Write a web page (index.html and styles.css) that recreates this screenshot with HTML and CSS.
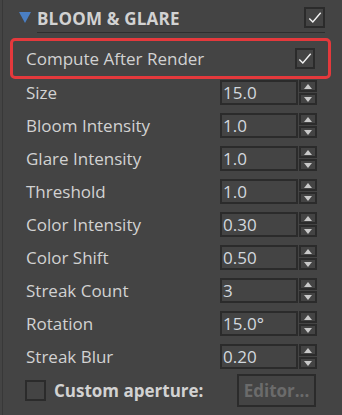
FILE: index.html
```html
<!DOCTYPE html>
<html lang="en">
<head>
  <meta charset="UTF-8" />
  <title>Bloom &amp; Glare</title>
  <link rel="stylesheet" href="styles.css">
</head>
<body>
  <div class="panel">
    <div class="section-head">
      <span class="caret"></span>
      <div class="head-main">
        <h2>BLOOM &amp; GLARE</h2>
        <span class="check big">
          <svg viewBox="0 0 16 16"><polyline points="1.5,8.5 5.5,12.5 14.5,2" /></svg>
        </span>
      </div>
    </div>

    <div class="highlight">
      <span>Compute After Render</span>
      <span class="check">
        <svg viewBox="0 0 16 16"><polyline points="1.5,8.5 5.5,12.5 14.5,2" /></svg>
      </span>
    </div>

    <ul class="params" id="params"></ul>

    <div class="aperture">
      <span class="check empty"></span>
      <span class="aperture-label">Custom aperture:</span>
      <button class="editor" disabled>Editor...</button>
    </div>
  </div>

  <script>
    const params = [
      ['Size', '15.0'],
      ['Bloom Intensity', '1.0'],
      ['Glare Intensity', '1.0'],
      ['Threshold', '1.0'],
      ['Color Intensity', '0.30'],
      ['Color Shift', '0.50'],
      ['Streak Count', '3'],
      ['Rotation', '15.0\u00b0'],
      ['Streak Blur', '0.20']
    ];

    // one row per parameter: label + numeric field + spinner
    document.getElementById('params').innerHTML = params.map(([name, val]) => `
      <li class="param">
        <label>${name}</label>
        <span class="field">${val}</span>
        <span class="spinner">
          <span class="arrow up"></span>
          <span class="arrow down"></span>
        </span>
      </li>
    `).join('');
  </script>
</body>
</html>
```

FILE: styles.css
```css
:root {
  --panel-bg: #444444;
  --edge: #2b2b2b;
  --text: #d2d2d2;
  --value: #d2d8de;
  --accent: #4a7fc4;
  --mark: #e4393c;
}
* {
  margin: 0;
  padding: 0;
  box-sizing: border-box;
}
body {
  background: var(--panel-bg);
  font-family: 'Open Sans', 'Noto Sans', sans-serif;
  font-size: 17px;
  color: var(--text);
  width: 342px;
  height: 415px;
  overflow: hidden;
}
.panel {
  height: 415px;
  border-left: 1px solid #383838;
  margin-left: 2px;
}
.section-head {
  display: flex;
  padding-left: 16px;
  height: 33px;
}
.caret {
  width: 0;
  height: 0;
  border-left: 6px solid transparent;
  border-right: 6px solid transparent;
  border-top: 11px solid var(--accent);
  margin-top: 12px;
}
.head-main {
  flex: 1;
  margin-left: 6px;
  margin-right: 17px;
  display: flex;
  justify-content: space-between;
  align-items: flex-start;
  border-bottom: 1px solid #2e2e2e;
}
.head-main h2 {
  font-size: 17px;
  font-weight: 700;
  line-height: 24px;
  margin-top: 7px;
  letter-spacing: 0.2px;
}
.check {
  width: 20px;
  height: 21px;
  border: 2px solid var(--edge);
  display: flex;
  align-items: center;
  justify-content: center;
}
.check.big {
  margin-top: 7px;
  width: 21px;
}
.check svg {
  width: 14px;
  height: 14px;
  fill: none;
  stroke: #f4f4f4;
  stroke-width: 1.6;
}
.highlight {
  margin: 5px 11px 0 7px;
  height: 41px;
  border: 3px solid var(--mark);
  border-radius: 5px;
  display: flex;
  align-items: center;
  justify-content: space-between;
  padding: 0 13px 0 13px;
}
.params {
  list-style: none;
  margin-top: 1px;
  display: flex;
  flex-direction: column;
  gap: 8px;
}
.param {
  display: flex;
  align-items: center;
  height: 25px;
  padding-left: 23px;
}
.param label {
  flex: 1;
}
.field {
  width: 78px;
  height: 25px;
  border: 2px solid var(--edge);
  color: var(--value);
  line-height: 21px;
  padding-left: 1px;
}
.spinner {
  width: 18px;
  height: 25px;
  margin-left: 1px;
  margin-right: 25px;
  display: flex;
  flex-direction: column;
  gap: 1px;
}
.arrow {
  flex: 1;
  border: 2px solid var(--edge);
  display: flex;
  align-items: center;
  justify-content: center;
}
.arrow::after {
  content: '';
  border-left: 4px solid transparent;
  border-right: 4px solid transparent;
}
.arrow.up::after {
  border-bottom: 5px solid #c9c9c9;
}
.arrow.down::after {
  border-top: 5px solid #c9c9c9;
}
.aperture {
  display: flex;
  align-items: center;
  margin-top: 5px;
  padding-left: 22px;
  height: 33px;
}
.aperture .check {
  width: 21px;
  height: 21px;
}
.aperture-label {
  flex: 1;
  font-weight: 700;
  margin-left: 8px;
}
.editor {
  width: 79px;
  height: 33px;
  margin-right: 26px;
  background: transparent;
  border: 2px solid var(--edge);
  color: #6b6b6b;
  font-family: inherit;
  font-size: 17px;
  font-weight: 700;
}
```
